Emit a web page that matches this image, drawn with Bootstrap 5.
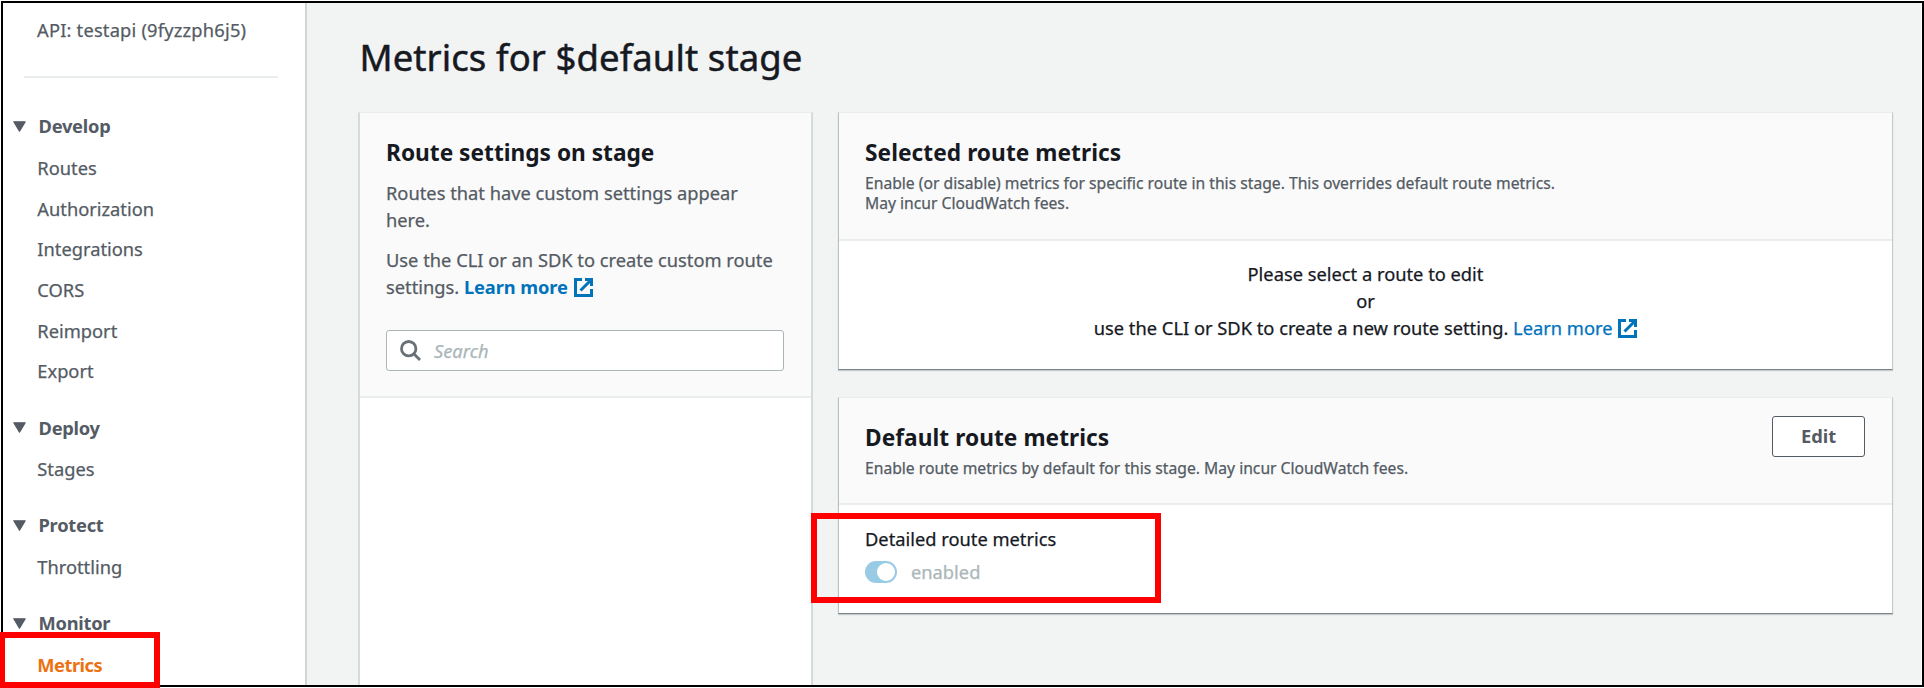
<!DOCTYPE html>
<html lang="en">
<head>
<meta charset="utf-8">
<meta name="viewport" content="width=device-width, initial-scale=1">
<title>Metrics for $default stage</title>
<link rel="stylesheet" href="https://cdn.jsdelivr.net/npm/bootstrap@5.3.0/dist/css/bootstrap.min.css">
<style>
  body { font: 400 18.3px/27px "Noto Sans", "Open Sans", sans-serif; color: #16191f; background: #fff; height: 688px; overflow: hidden; -webkit-text-stroke: .25px; }
  .frame { position: relative; height: 688px; padding: 3px 3px 3px 2px; }
  .frame::after { content: ""; position: absolute; inset: 1px 0 1px 1px; border: 2px solid #000; pointer-events: none; }
  .side { width: 305px; border-right: 2px solid #d0d5d5; color: #545b64; flex: none; padding-top: 13.4px; }
  .side .api { padding-left: 35px; letter-spacing: .2px; }
  .side hr { margin: 32.6px 27px 34.4px 22px; border-top: 2px solid #eaeded; opacity: 1; }
  .group-title { gap: 12.5px; padding-left: 11px; margin-bottom: 8.6px; font-weight: 700; letter-spacing: -.25px; -webkit-text-stroke: 0; }
  .group-title svg { position: relative; top: .6px; }
  .group-links { margin: 0 0 21.4px; padding-left: 35.300px; }
  .group-links a { display: block; line-height: 40.7px; color: inherit; text-decoration: none; }
  .group-links a.current { color: #ec7211; font-weight: 700; letter-spacing: -.5px; -webkit-text-stroke: 0; }
  .content-area { background: #f2f3f3; padding: 32px 28px 0 51px; }
  h1 { font-size: 36.5px; line-height: 44px; font-weight: 400; margin: 0 0 33px; padding-left: 1.5px; letter-spacing: .08px; -webkit-text-stroke: .5px; }
  h2 { font-size: 22.7px; line-height: 30px; font-weight: 700; margin: 0; letter-spacing: .05px; -webkit-text-stroke: 0; }
  .panel { background: #fff; border: 1px solid #eaeded; border-color: #eaeded #c3cbcd #7b868b #b5c0c3; box-shadow: 0 1px 1px #c4cacc; }
  .panel-head { background: #fafafa; border-bottom: 2px solid #eaeded; padding: 25px 26px 25.5px; }
  .panel-head p { color: #545b64; margin: 0; }
  .routes { width: 455px; flex: none; border: 2px solid #d5dbdb; border-top: 1px solid #eaeded; border-bottom: 0; box-shadow: none; }
  .routes .panel-head { padding: 25px 27px 25px 26px; }
  .routes h2 { margin-bottom: 10.6px; letter-spacing: 0; }
  .desc { font-size: 15.68px; line-height: 20px; margin-top: 5.2px !important; }
  .lnk { color: #0073bb; text-decoration: none; }
  .lnk.fw-bold { letter-spacing: -.1px; -webkit-text-stroke: 0; }
  .lnk svg { vertical-align: -3px; margin-left: 2px; }
  .panel-body .lnk svg { margin-left: 1px; }
  .find { height: 41px; border: 1.5px solid #aab7b8; border-radius: 3px; background: #fff; margin: 29.6px 0 0; padding-left: 13px; gap: 13px; font-style: italic; color: #aab7b8; }
  .panel-body { padding: 19.5px 26px 27.5px; }
  .btn-edit { width: 93px; height: 41px; padding: 0; border: 1.5px solid #545b64; border-radius: 3px; background: #fff; color: #545b64; font: inherit; font-weight: 700; margin-top: -7px; margin-right: 1px; line-height: 36px; -webkit-text-stroke: 0; }
  .toggle { width: 32px; height: 22px; border-radius: 11px; background: #99cbe4; padding: 2px; }
  .toggle i { width: 18px; height: 18px; border-radius: 50%; background: #fff; }
  .callout { position: absolute; border: 6px solid #f00; z-index: 2; }
  .callout-nav { left: -1px; top: 632px; width: 161px; height: 56px; }
  .callout-toggle { left: -28px; top: 8px; width: 350px; height: 90px; }
</style>
</head>
<body>
<svg class="d-none">
  <symbol id="ext" viewBox="0 0 19 19"><path d="M8 1.5H1.5v16h16V11M11 1.5h6.500V8M17 2L6.500 12.500" fill="none" stroke="currentColor" stroke-width="3"/></symbol>
  <symbol id="tri" viewBox="0 0 13 11"><path d="M.8.8h11.400L6.500 10.200z" fill="currentColor" stroke="currentColor" stroke-width="1.200" stroke-linejoin="round"/></symbol>
</svg>
<div class="frame d-flex">
  <nav class="side">
    <div class="api">API: testapi (9fyzzph6j5)</div>
    <hr>
    <div class="group-title d-flex align-items-center"><svg width="13" height="11"><use href="#tri"/></svg>Develop</div>
    <div class="group-links"><a href="#">Routes</a><a href="#">Authorization</a><a href="#">Integrations</a><a href="#">CORS</a><a href="#">Reimport</a><a href="#">Export</a></div>
    <div class="group-title d-flex align-items-center"><svg width="13" height="11"><use href="#tri"/></svg>Deploy</div>
    <div class="group-links"><a href="#">Stages</a></div>
    <div class="group-title d-flex align-items-center"><svg width="13" height="11"><use href="#tri"/></svg>Protect</div>
    <div class="group-links"><a href="#">Throttling</a></div>
    <div class="group-title d-flex align-items-center"><svg width="13" height="11"><use href="#tri"/></svg>Monitor</div>
    <div class="group-links mb-0"><a href="#" class="current">Metrics</a></div>
  </nav>
  <main class="content-area flex-grow-1 d-flex flex-column">
    <h1>Metrics for $default stage</h1>
    <div class="d-flex flex-grow-1">
      <section class="panel routes">
        <div class="panel-head">
          <h2>Route settings on stage</h2>
          <p style="margin-bottom:13.6px">Routes that have custom settings appear here.</p>
          <p class="text-nowrap">Use the CLI or an SDK to create custom route<br>settings. <a href="#" class="lnk fw-bold">Learn more <svg width="19" height="19"><use href="#ext"/></svg></a></p>
          <div class="find d-flex align-items-center">
            <svg width="21" height="21" viewBox="0 0 21 21" fill="none" stroke="#687078" stroke-width="2.800"><circle cx="8.700" cy="8.700" r="7.200"/><path d="M14 14l6 6"/></svg>
            <span>Search</span>
          </div>
        </div>
      </section>
      <div class="flex-grow-1" style="margin-left:25px">
        <section class="panel" style="margin-bottom:27px">
          <div class="panel-head">
            <h2>Selected route metrics</h2>
            <p class="desc">Enable (or disable) metrics for specific route in this stage. This overrides default route metrics.<br>May incur CloudWatch fees.</p>
          </div>
          <div class="panel-body text-center">Please select a route to edit<br>or<br>use the CLI or SDK to create a new route setting. <a href="#" class="lnk">Learn more <svg width="19" height="19"><use href="#ext"/></svg></a></div>
        </section>
        <section class="panel">
          <div class="panel-head d-flex justify-content-between align-items-start">
            <div>
              <h2>Default route metrics</h2>
              <p class="desc">Enable route metrics by default for this stage. May incur CloudWatch fees.</p>
            </div>
            <button class="btn btn-edit">Edit</button>
          </div>
          <div class="panel-body position-relative">
            <div>Detailed route metrics</div>
            <div class="d-flex align-items-center" style="gap:14px;margin-top:6.6px;color:#aab7b8"><span class="toggle d-flex justify-content-end align-items-center"><i></i></span>enabled</div>
            <div class="callout callout-toggle"></div>
          </div>
        </section>
      </div>
    </div>
  </main>
  <div class="callout callout-nav"></div>
</div>
<script src="https://cdn.jsdelivr.net/npm/bootstrap@5.3.0/dist/js/bootstrap.bundle.min.js"></script>
</body>
</html>
